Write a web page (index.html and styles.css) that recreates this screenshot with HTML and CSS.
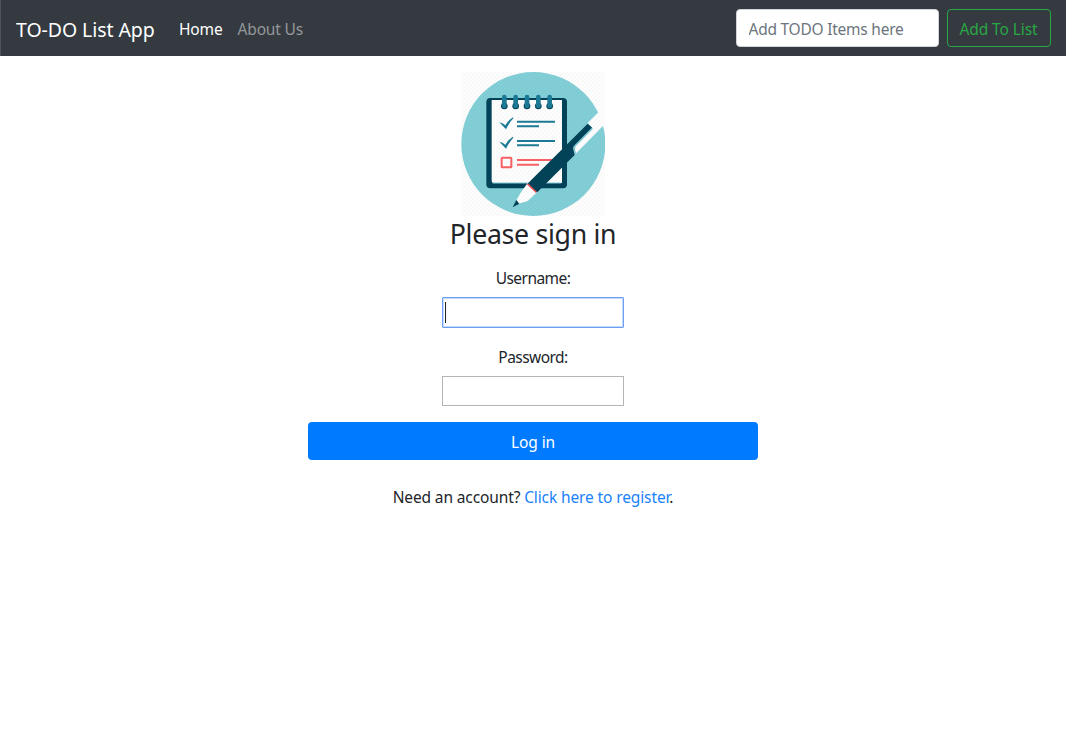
FILE: index.html
```html
<!DOCTYPE html>
<html lang="en">
<head>
<meta charset="utf-8">
<title>TO-DO List App</title>
<link rel="stylesheet" href="styles.css">
</head>
<body>
<nav class="navbar">
  <a class="brand"><span>TO-DO List App</span></a>
  <a class="nav-link active"><span>Home</span></a>
  <a class="nav-link"><span>About Us</span></a>
  <form class="add-form">
    <input class="add-input" type="text" placeholder="Add TODO Items here">
    <button class="add-button" type="button">Add To List</button>
  </form>
</nav>
<main class="signin">
  <svg class="logo" viewBox="18 21 432 432">
    <defs>
      <pattern id="stripes" width="12" height="12" patternUnits="userSpaceOnUse">
        <path d="M-3 3L3-3M0 12L12 0M9 15L15 9" stroke="#000" stroke-opacity=".03" stroke-width="4"/>
      </pattern>
    </defs>
    <path fill="#fff" d="M18 21h432v432H18z"/>
    <circle cx="235" cy="237" r="216" fill="#83d0d8"/>
    <path fill="#fff" d="M430 142L398 174L412 188L356 244Q351 258 362 266L446 181L458 140z"/>
    <rect x="94" y="99" width="242" height="271" rx="12" fill="#03435a"/>
    <path fill="#fff" d="M110 105H321V354H116Q110 354 110 348z"/>
    <path d="M113 354H318" stroke="#80cdd6" stroke-width="3"/>
    <g fill="#03435a"><circle cx="148" cy="123" r="10"/><circle cx="182" cy="123" r="10"/><circle cx="216" cy="123" r="10"/><circle cx="250" cy="123" r="10"/><circle cx="284" cy="123" r="10"/></g>
    <path d="M148 96v27M182 96v27M216 96v27M250 96v27M284 96v27" stroke="#1d7c97" stroke-width="14" stroke-linecap="round"/>
    <path d="M186 170H300M186 184H252M186 228H300M186 241H252" stroke="#1d7c97" stroke-width="6"/>
    <path fill="#1d7c97" d="M133 172Q143 173 151 181Q159 166 174 157L175 160Q162 174 153 193zM133 230Q143 231 151 239Q159 224 174 215L175 218Q162 232 153 251z"/>
    <rect x="140" y="278" width="29" height="29" rx="2" fill="none" stroke="#fa6267" stroke-width="6"/>
    <path d="M186 285H293M186 299H252" stroke="#fa6267" stroke-width="6"/>
    <path fill="#fff" d="M218 354L246 382L218 408L188 417L184 406L198 382z"/>
    <path d="M218 356L245 382" stroke="#f04f55" stroke-width="6"/>
    <path fill="#03435a" d="M398 176L412 189L355 246L359 270L247 382L219 355L334 240z"/>
    <path fill="#03435a" d="M184 405L193 416L173 427z"/>
    <path d="M412 190L360 243Q354 253 362 265" fill="none" stroke="#80cdd6" stroke-width="5"/>
    <path fill="url(#stripes)" d="M18 21h432v432H18z"/>
  </svg>
  <h1 class="title"><span>Please sign in</span></h1>
  <form class="fields">
    <label class="label label-user" for="username"><span>Username:</span></label>
    <div class="field focused" id="username"><i class="caret"></i></div>
    <label class="label label-pass" for="password"><span>Password:</span></label>
    <input class="field" id="password" type="password">
    <button class="login" type="button">Log in</button>
  </form>
  <p class="register"><span>Need an account? <a class="link">Click here to register</a>.</span></p>
</main>
</body>
</html>
```
FILE: styles.css
```css
* { box-sizing: border-box; }
body {
  margin: 0;
  background: #fff;
  color: #212529;
  font: 15.5px/24px "Noto Sans", "Open Sans", sans-serif;
}
button, input { font: inherit; }
.navbar {
  display: flex;
  align-items: center;
  height: 56px;
  padding: 0 15.5px 0 15px;
  background: #343a40;
  border-left: 1px solid #4b5660;
  white-space: nowrap;
}
.brand { width: 163px; padding-top: 3px; color: #fff; font-size: 19.5px; line-height: 30px; letter-spacing: -.07px; }
.nav-link { padding-top: 2px; color: #95989b; letter-spacing: -.15px; }
.nav-link.active { width: 58.5px; color: #fff; }
.add-form { display: flex; gap: 8px; margin-left: auto; }
.add-input {
  width: 203px;
  height: 38px;
  padding: 8px 12px 6px;
  border: 1px solid #ced4da;
  border-radius: 4px;
  background: #fff;
  letter-spacing: -.24px;
}
.add-input::placeholder { color: #6c757d; opacity: 1; }
.add-button {
  width: 104px;
  height: 38px;
  padding: 2px 0 0;
  color: #28a745;
  background: transparent;
  border: 1px solid #28a745;
  border-radius: 4px;
  letter-spacing: -.1px;
  white-space: nowrap;
}
.signin {
  display: flex;
  flex-direction: column;
  align-items: center;
  width: 450px;
  margin: 0 auto;
  padding-top: 16px;
}
.logo { display: block; width: 144px; height: 144px; }
.title { margin: 0; font-size: 26.7px; font-weight: 400; line-height: 36px; letter-spacing: -.3px; white-space: nowrap; }
.fields { display: flex; flex-direction: column; align-items: center; width: 100%; }
.label { line-height: 24px; letter-spacing: -.55px; }
.label-user { margin-top: 14px; }
.label-pass { margin-top: 17px; }
.field {
  display: block;
  width: 182px;
  height: 30px;
  margin-top: 7px;
  padding: 4px 2px;
  border: 1px solid #b5b5b5;
  background: #fff;
}
.focused { width: 182px; height: 31px; border-color: #6b9ff0; box-shadow: inset 0 0 0 1px #c4d9fb; border-radius: 1px; }
.caret { display: block; width: 1px; height: 21px; background: #222; }
.login {
  width: 100%;
  height: 38px;
  margin-top: 16px;
  padding: 1px 0 0;
  color: #fff;
  background: #007bff;
  border: 0;
  border-radius: 4px;
  letter-spacing: -.1px;
}
.register { margin: 25px 0 0; letter-spacing: -.12px; white-space: nowrap; }
.link { color: #1a82fb; }
```
